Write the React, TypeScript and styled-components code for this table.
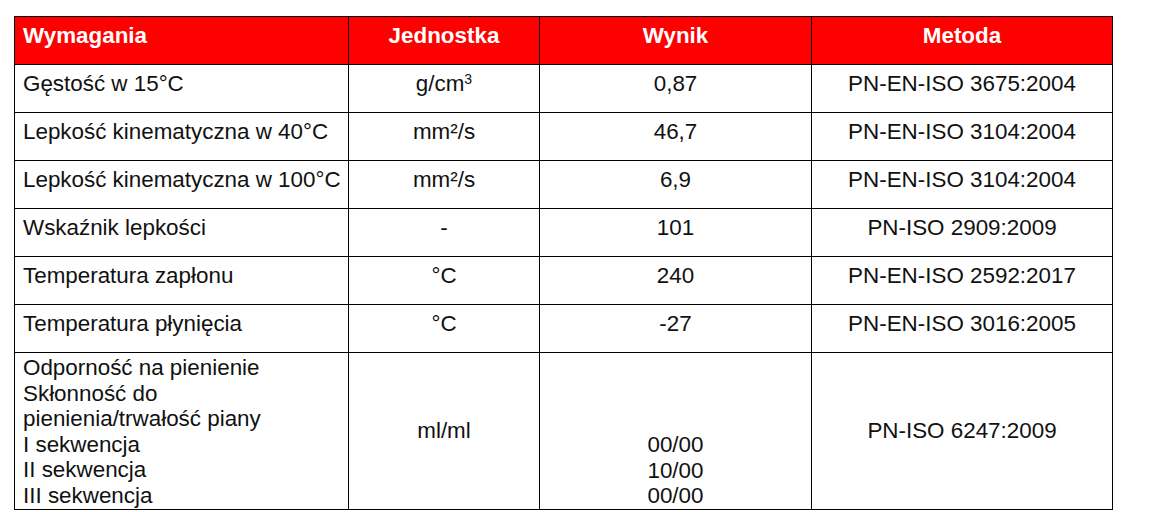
import React from 'react';
import styled, { createGlobalStyle } from 'styled-components';

// --- Global page styles ---

const GlobalStyle = createGlobalStyle`
  html, body {
    margin: 0;
    padding: 0;
    background: #ffffff;
  }
  body {
    font-family: "Liberation Sans", Arial, sans-serif;
    color: #111111;
  }
`;

// --- Styled Components ---

const Page = styled.div`
  padding: 16px 0 0 14px;
  height: 512px;
  box-sizing: border-box;
  overflow: hidden;
`;

const SpecTable = styled.table`
  width: 1099px;
  table-layout: fixed;
  border-collapse: collapse;
  font-size: 22.4px;
  line-height: 25.6px;
`;

const HeadCell = styled.th<{ $align?: 'left' | 'center' }>`
  background-color: #ff0000;
  color: #ffffff;
  font-weight: 700;
  height: 48px;
  padding: 6px 8px 0;
  box-sizing: border-box;
  text-align: ${props => props.$align || 'center'};
  vertical-align: top;
  border: 1px solid #000000;
`;

const Cell = styled.td<{ $align?: 'left' | 'center'; $valign?: 'top' | 'middle' | 'bottom'; $pad?: string }>`
  height: 48px;
  padding: ${props => props.$pad || '6px 8px 0'};
  box-sizing: border-box;
  text-align: ${props => props.$align || 'center'};
  vertical-align: ${props => props.$valign || 'top'};
  border: 1px solid #000000;
  white-space: pre;
`;

const TallRow = styled.tr`
  height: 157px;
`;

const Sup = styled.sup`
  font-size: 14px;
  line-height: 0;
  vertical-align: 7px;
`;

// --- Data ---

type Row = {
  name: string;
  unit: React.ReactNode;
  value: string;
  method: string;
};

const rows: Row[] = [
  { name: 'Gęstość w 15°C', unit: <>g/cm<Sup>3</Sup></>, value: '0,87', method: 'PN-EN-ISO 3675:2004' },
  { name: 'Lepkość kinematyczna w 40°C', unit: 'mm²/s', value: '46,7', method: 'PN-EN-ISO 3104:2004' },
  { name: 'Lepkość kinematyczna w 100°C', unit: 'mm²/s', value: '6,9', method: 'PN-EN-ISO 3104:2004' },
  { name: 'Wskaźnik lepkości', unit: '-', value: '101', method: 'PN-ISO 2909:2009' },
  { name: 'Temperatura zapłonu', unit: '°C', value: '240', method: 'PN-EN-ISO 2592:2017' },
  { name: 'Temperatura płynięcia', unit: '°C', value: '-27', method: 'PN-EN-ISO 3016:2005' },
];

// --- App ---

const App: React.FC = () => {
  return (
    <>
      <GlobalStyle />
      <Page>
        <SpecTable>
          <colgroup>
            <col style={{ width: 334 }} />
            <col style={{ width: 191 }} />
            <col style={{ width: 272 }} />
            <col style={{ width: 301 }} />
          </colgroup>
          <thead>
            <tr>
              <HeadCell $align="left">Wymagania</HeadCell>
              <HeadCell>Jednostka</HeadCell>
              <HeadCell>Wynik</HeadCell>
              <HeadCell>Metoda</HeadCell>
            </tr>
          </thead>
          <tbody>
            {rows.map(row => (
              <tr key={row.name}>
                <Cell $align="left" $pad="6px 0 0 8px">{row.name}</Cell>
                <Cell>{row.unit}</Cell>
                <Cell>{row.value}</Cell>
                <Cell>{row.method}</Cell>
              </tr>
            ))}
            <TallRow>
              <Cell $align="left" $pad="2px 0 0 8px">
                {'Odporność na pienienie\nSkłonność do\npienienia/trwałość piany\nI sekwencja\nII sekwencja\nIII sekwencja'}
              </Cell>
              <Cell $valign="middle" $pad="0 8px">ml/ml</Cell>
              <Cell $valign="bottom" $pad="0 8px 0">{'00/00\n10/00\n00/00'}</Cell>
              <Cell $valign="middle" $pad="0 8px">PN-ISO 6247:2009</Cell>
            </TallRow>
          </tbody>
        </SpecTable>
      </Page>
    </>
  );
};

export default App;
